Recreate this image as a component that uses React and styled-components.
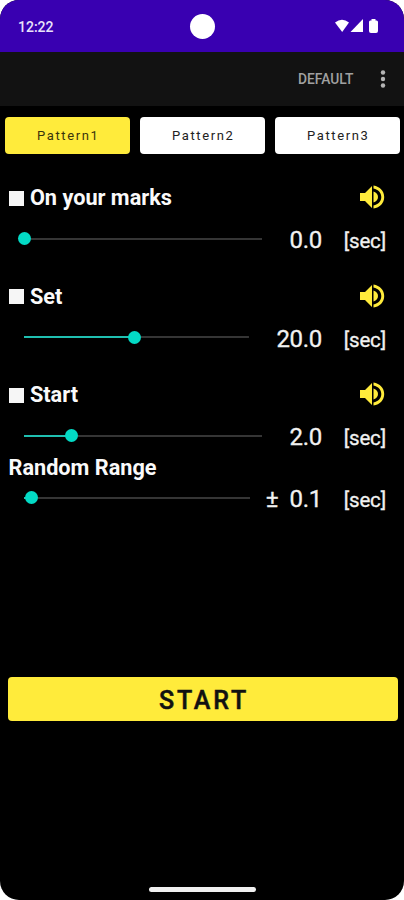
import styled, {createGlobalStyle} from "styled-components";

const GlobalStyle = createGlobalStyle`
    * {
        box-sizing: border-box;
    }

    body {
        margin: 0;
        background: #fff;
        font-family: Roboto, "Liberation Sans", sans-serif;
    }
`;

const Phone = styled.div`
    display: flex;
    flex-direction: column;
    width: 404px;
    height: 900px;
    overflow: hidden;
    border-radius: 19px;
    background: #000;
    color: #f1f1f1;
`;

const StatusBar = styled.header`
    display: grid;
    grid-template-columns: 1fr auto 1fr;
    align-items: center;
    height: 51.5px;
    padding: 2px 25px 0 18px;
    background: #3900b1;
`;

const Clock = styled.span`
    font-size: 14px;
    font-weight: 500;
    color: #e9e2fb;
`;

const Camera = styled.div`
    width: 25px;
    height: 25px;
    margin-left: 7px;
    border-radius: 50%;
    background: #fff;
`;

const StatusIcons = styled.svg`
    justify-self: end;
    width: 44px;
    height: 14px;
    margin-top: -2px;
    margin-right: 0.5px;
    fill: #fff;
`;

const AppBar = styled.div`
    display: flex;
    justify-content: flex-end;
    align-items: center;
    gap: 26.5px;
    height: 54.5px;
    padding: 0 18px 0 0;
    background: #121212;
`;

const MenuText = styled.span`
    font-size: 13.8px;
    font-weight: 500;
    color: #a0a0a0;
`;

const Dots = styled.svg`
    width: 6px;
    height: 18px;
    fill: #b4b4b4;
`;

const Tabs = styled.nav`
    display: grid;
    grid-template-columns: repeat(3, 1fr);
    gap: 9.5px;
    padding: 11px 4px 0 4.5px;
`;

const Tab = styled.button`
    height: 36.5px;
    padding: 0 0 0 2px;
    border: 0;
    border-radius: 4px;
    background: ${({$active}) => ($active ? "#ffeb3b" : "#fff")};
    color: ${({$active}) => ($active ? "#39340c" : "#222")};
    font-family: inherit;
    font-size: 13px;
    letter-spacing: 1.6px;
`;

const Settings = styled.main`
    display: flex;
    flex-direction: column;
    height: 523px;
    padding: 30.5px 18px 0 9px;
`;

const TitleRow = styled.div`
    display: flex;
    align-items: center;
    height: ${({$compact}) => ($compact ? "22px" : "28px")};
    margin-bottom: ${({$compact}) => ($compact ? "0" : "8px")};
`;

const Checkbox = styled.span`
    width: 15px;
    height: 15px;
    margin: 0 6px 0 0.4px;
    background: #f6f6f6;
`;

const Title = styled.h2`
    flex: 1;
    margin: 0 0 0 -0.5px;
    font-size: 21.7px;
    font-weight: 700;
    line-height: 28px;
    color: #fafafa;
`;

const SpeakerSvg = styled.svg`
    width: 26px;
    height: 26px;
    margin: -2px 1.5px 0 0;
    fill: #ffeb3b;
`;

const SliderRow = styled.div`
    display: flex;
    align-items: center;
    height: 40px;
    margin-bottom: ${({$last}) => ($last ? "0" : "22.5px")};
    padding-left: 15px;
`;

const Track = styled.div`
    display: flex;
    align-items: center;
    flex: 1;
    height: 13px;
    margin: -3px ${({$gap}) => $gap}px 0 0;
    background: linear-gradient(#353535, #353535) center / 100% 2px no-repeat;
`;

const Filled = styled.div`
    height: 2px;
    background: #1fbfb0;
`;

const Thumb = styled.div`
    flex: none;
    width: 13px;
    height: 13px;
    margin-left: -6.5px;
    border-radius: 50%;
    background: #03dac5;
`;

const Value = styled.span`
    font-size: 24px;
    line-height: 28px;
    letter-spacing: -0.3px;
    white-space: pre;
    -webkit-text-stroke: 0.3px currentColor;
`;

const Unit = styled.span`
    width: 64px;
    padding-top: 2px;
    font-size: 20.5px;
    line-height: 26px;
    letter-spacing: -0.15px;
    text-align: right;
    -webkit-text-stroke: 0.3px currentColor;
`;

const StartButton = styled.button`
    height: 44px;
    margin: 0 6.5px 0 7.5px;
    padding: 3px 0 0 3px;
    border: 0;
    border-radius: 4px;
    background: #ffeb3b;
    color: #111;
    font-family: inherit;
    font-size: 25px;
    font-weight: 500;
    letter-spacing: 2.8px;
    -webkit-text-stroke: 0.5px currentColor;
`;

const HomeBar = styled.div`
    width: 107px;
    height: 5px;
    margin: auto auto 8.5px 149px;
    border-radius: 3px;
    background: #f0f0f0;
`;

const tabs = ["Pattern1", "Pattern2", "Pattern3"];

const timers = [
    {title: "On your marks", value: "0.0", percent: 0},
    {title: "Set", value: "20.0", percent: 49},
    {title: "Start", value: "2.0", percent: 20},
];

function Speaker() {
    return (
        <SpeakerSvg viewBox="0 0 26 26">
            <path d="M1 9h5l7-7v22l-7-7H1z"/>
            <path d="M14.5 7.5c3 1 4.5 3 4.5 5.5s-1.5 4.5-4.5 5.5z"/>
            <path d="M14.5 1.5c6.5 1 10.7 5.5 10.7 11.5s-4.2 10.5-10.7 11.5v-3c4.8-1 7.8-4.3 7.8-8.5s-3-7.5-7.8-8.5z"/>
        </SpeakerSvg>
    );
}

function Slider({value, percent, gap = 27.5, last}) {
    return (
        <SliderRow $last={last}>
            <Track $gap={gap}>
                <Filled style={{width: `${percent}%`}}/>
                <Thumb/>
            </Track>
            <Value>{value}</Value>
            <Unit>[sec]</Unit>
        </SliderRow>
    );
}

export default function App() {
    return (
        <>
            <GlobalStyle/>
            <Phone>
                <StatusBar>
                    <Clock>12:22</Clock>
                    <Camera/>
                    <StatusIcons viewBox="0 0 44 14">
                        <path d="M0 3.5Q7 -2 14 3.5L7.2 13z"/>
                        <path d="M28 0v13H15.5z"/>
                        <path d="M36.5 0h4v1.5h1.2q1.3 0 1.3 1.5v9q0 2-2 2h-5q-2 0-2-2V3q0-1.5 1.3-1.5h1.2z"/>
                    </StatusIcons>
                </StatusBar>
                <AppBar>
                    <MenuText>DEFAULT</MenuText>
                    <Dots viewBox="0 0 6 18">
                        <circle cx="3" cy="2.5" r="2.2"/>
                        <circle cx="3" cy="9" r="2.2"/>
                        <circle cx="3" cy="15.5" r="2.2"/>
                    </Dots>
                </AppBar>
                <Tabs>
                    {tabs.map((name, i) => (
                        <Tab key={name} $active={i === 0}>{name}</Tab>
                    ))}
                </Tabs>
                <Settings>
                    {timers.map(({title, value, percent}, i) => (
                        <div key={title}>
                            <TitleRow>
                                <Checkbox/>
                                <Title>{title}</Title>
                                <Speaker/>
                            </TitleRow>
                            <Slider value={value} percent={percent} last={i === timers.length - 1}/>
                        </div>
                    ))}
                    <TitleRow $compact>
                        <Title>Random Range</Title>
                    </TitleRow>
                    <Slider value="±  0.1" percent={3.5} gap={15.5} last/>
                </Settings>
                <StartButton>START</StartButton>
                <HomeBar/>
            </Phone>
        </>
    );
}
